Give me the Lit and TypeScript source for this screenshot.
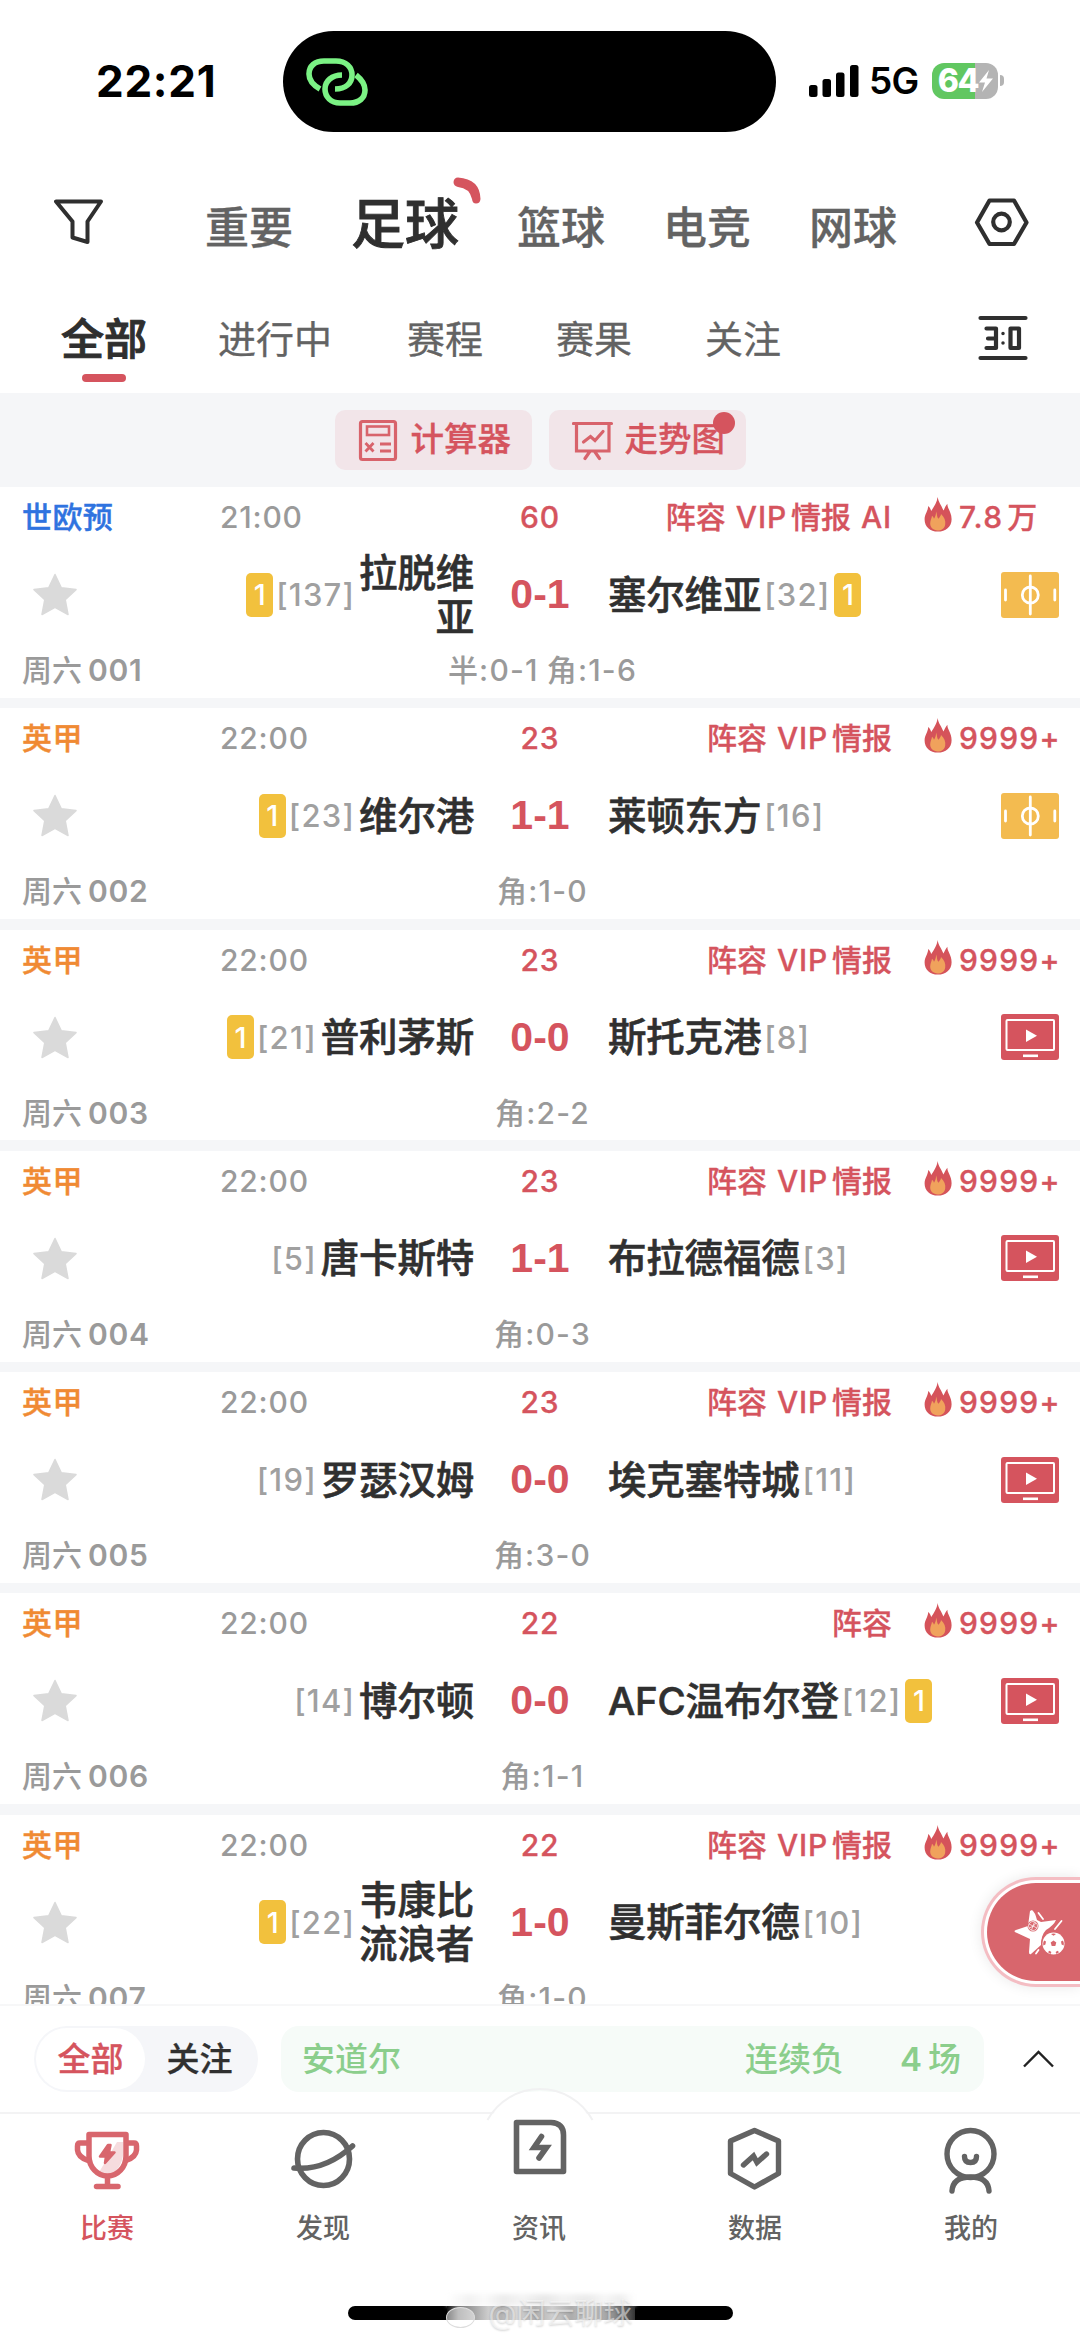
import { LitElement, html, css, svg } from "lit";
import { customElement, property } from "lit/decorators.js";
import { classMap } from "lit/directives/class-map.js";

interface Match {
  league: string;
  color: "blue" | "orange";
  time: string;
  minute: string;
  tags: string[];
  heat: string;
  heatUnit?: string;
  homeCard?: string;
  homeRank: string;
  home: string[];
  score: string;
  away: string;
  awayRank: string;
  awayCard?: string;
  media: "pitch" | "tv";
  no: string;
  half?: string;
  corner: string;
}

const FULL = ["阵容", "VIP", "情报"];

const MATCHES: Match[] = [
  { league: "世欧预", color: "blue", time: "21:00", minute: "60", tags: [...FULL, "AI"], heat: "7.8", heatUnit: "万", homeCard: "1", homeRank: "137", home: ["拉脱维", "亚"], score: "0-1", away: "塞尔维亚", awayRank: "32", awayCard: "1", media: "pitch", no: "001", half: "0-1", corner: "1-6" },
  { league: "英甲", color: "orange", time: "22:00", minute: "23", tags: FULL, heat: "9999+", homeCard: "1", homeRank: "23", home: ["维尔港"], score: "1-1", away: "莱顿东方", awayRank: "16", media: "pitch", no: "002", corner: "1-0" },
  { league: "英甲", color: "orange", time: "22:00", minute: "23", tags: FULL, heat: "9999+", homeCard: "1", homeRank: "21", home: ["普利茅斯"], score: "0-0", away: "斯托克港", awayRank: "8", media: "tv", no: "003", corner: "2-2" },
  { league: "英甲", color: "orange", time: "22:00", minute: "23", tags: FULL, heat: "9999+", homeRank: "5", home: ["唐卡斯特"], score: "1-1", away: "布拉德福德", awayRank: "3", media: "tv", no: "004", corner: "0-3" },
  { league: "英甲", color: "orange", time: "22:00", minute: "23", tags: FULL, heat: "9999+", homeRank: "19", home: ["罗瑟汉姆"], score: "0-0", away: "埃克塞特城", awayRank: "11", media: "tv", no: "005", corner: "3-0" },
  { league: "英甲", color: "orange", time: "22:00", minute: "22", tags: ["阵容"], heat: "9999+", homeRank: "14", home: ["博尔顿"], score: "0-0", away: "AFC温布尔登", awayRank: "12", awayCard: "1", media: "tv", no: "006", corner: "1-1" },
  { league: "英甲", color: "orange", time: "22:00", minute: "22", tags: FULL, heat: "9999+", homeCard: "1", homeRank: "22", home: ["韦康比", "流浪者"], score: "1-0", away: "曼斯菲尔德", awayRank: "10", media: "tv", no: "007", corner: "1-0" },
];

const flame = html`<svg class="flame" viewBox="0 0 28 35" width="28" height="35">
  <path fill="#d5535a" d="M13.600 0C14.200 5 17.600 8.400 19.400 13.600C20.600 11.800 21.400 8.800 23.400 6.800C23 11 27.600 15 27.600 22.200C27.600 29.800 21.600 34.600 13.900 34.600C6 34.600 .6 29.600 .6 22.400C.6 17 4 14.400 4.200 9C5.800 10.400 6.600 12 7.200 14C9.800 10 13 5.600 13.600 0Z"/>
  <path fill="#f0a25c" d="M12 14.500C13.400 17.400 12.600 19.800 14.400 21.800C15.600 20.400 16.800 19 17 17C20.400 20.400 21.800 23.600 21.200 27.400C20.600 31.400 17.400 33.400 13.600 33.400C9.400 33.400 6.200 30.600 6.200 26.600C6.200 23.600 7.600 21.400 8 18.800C9 19.600 9.600 20.600 10 21.800C11.200 19.800 12.200 17.600 12 14.500Z"/>
</svg>`;

const star = html`<svg class="star" viewBox="0 0 44 43" width="44" height="43">
  <path fill="#dadada" stroke="#dadada" stroke-width="1.500" stroke-linejoin="round" d="M22 1.500L28.300 14.800L43 16.600L32.200 26.700L35 41.500L22 34.400L9 41.500L11.800 26.700L1 16.600L15.700 14.800Z"/>
</svg>`;

const media = {
  pitch: html`<svg class="media" viewBox="0 0 58 46" width="58" height="46">
    <rect width="58" height="46" rx="3" fill="#f3bb50"/>
    <g fill="none" stroke="#fff" stroke-width="2.800" stroke-linecap="round">
      <path d="M29.300 4V42M4.500 18V28M53.800 18V28"/><circle cx="29.300" cy="23" r="8"/>
    </g>
  </svg>`,
  tv: html`<svg class="media" viewBox="0 0 58 46" width="58" height="46">
    <rect width="58" height="46" rx="3" fill="#d5545e"/>
    <rect x="5.500" y="6" width="47.500" height="30" rx="1" fill="none" stroke="#fff" stroke-width="2"/>
    <path d="M22 41.800H37" stroke="#fff" stroke-width="2.600"/>
    <path d="M25 15.500L36 21.700L25 28Z" fill="#fff"/>
  </svg>`,
};

@customElement("match-row")
class MatchRow extends LitElement {
  @property({ attribute: false }) match!: Match;

  static styles = css`
    :host { display: block; height: 210.700px; flex: none; background: #fff; font-size: 30px; line-height: 1; color: #9a9a9a; font-weight: 500; }
    .head, .mid, .foot { display: grid; align-items: center; }
    .head { grid-template-columns: 220px 200px 240px 1fr; height: 60px; box-sizing: border-box; }
    .league { padding-left: 22px; -webkit-text-stroke: .4px; letter-spacing: .4px; }
    .blue { color: #2f73e0; }
    .orange { color: #f08a33; }
    .num { letter-spacing: .8px; }
    .red { color: #d5545e; -webkit-text-stroke: .3px; }
    .minute { text-align: center; }
    .info { display: flex; align-items: center; }
    .info .num { letter-spacing: 1.200px; }
    .tags { width: 232px; display: flex; justify-content: flex-end; flex: none; }
    .tag.gap { margin-left: 10px; letter-spacing: .8px; }
    .tag.tight { margin-left: 4px; }
    .flame { margin: -5px 7px 0 32px; flex: none; }
    .unit { margin-left: 4px; }
    .mid { grid-template-columns: 220px 254px 132px 1fr 79px; height: 95px; }
    .star { margin-left: 33px; display: block; }
    .side { display: flex; align-items: center; white-space: nowrap; }
    .home { justify-content: flex-end; }
    .team { font-size: 38.500px; line-height: 44px; font-weight: 500; -webkit-text-stroke: .6px; color: #303030; text-align: right; letter-spacing: -.2px; }
    .team div { white-space: nowrap; }
    .away .team { padding-left: 2px; }
    .rank { font-size: 31px; font-weight: 450; color: #a0a0a0; padding: 0 4px 0 3px; letter-spacing: 1.200px; }
    .card { width: 27px; height: 44px; border-radius: 5px; background: #f2c13d; color: #fff; display: grid; place-items: center; font-size: 29px; font-weight: 450; }
    .score { text-align: center; color: #d5545e; font: 700 41px/1 "Liberation Sans", sans-serif; }
    .media { display: block; }
    .foot { grid-template-columns: 1fr 1fr 1fr; height: 56px; padding: 0 22px; }
    .order { display: flex; gap: 6px; }
    .order b { font-weight: 600; letter-spacing: .7px; }
    .stats { display: flex; justify-content: center; gap: 8px; white-space: nowrap; padding-left: 5px; letter-spacing: 1.200px; }
  `;

  render() {
    const m = this.match;
    const spacing = (t: string) => ({ tag: true, tight: t === "情报", gap: t === "VIP" || t === "AI" });
    return html`
      <div class="head">
        <span class="league ${m.color}">${m.league}</span>
        <span class="num">${m.time}</span>
        <span class="minute red num">${m.minute}</span>
        <div class="info red">
          <div class="tags">${m.tags.map((t) => html`<span class=${classMap(spacing(t))}>${t}</span>`)}</div>
          ${flame}<span class="num">${m.heat}</span>${m.heatUnit ? html`<span class="unit">${m.heatUnit}</span>` : ""}
        </div>
      </div>
      <div class="mid">
        ${star}
        <div class="side home">
          ${m.homeCard ? html`<span class="card">${m.homeCard}</span>` : ""}
          <span class="rank">[${m.homeRank}]</span>
          <div class="team">${m.home.map((l) => html`<div>${l}</div>`)}</div>
        </div>
        <span class="score">${m.score}</span>
        <div class="side away">
          <div class="team">${m.away}</div>
          <span class="rank">[${m.awayRank}]</span>
          ${m.awayCard ? html`<span class="card">${m.awayCard}</span>` : ""}
        </div>
        ${media[m.media]}
      </div>
      <div class="foot">
        <span class="order">周六<b>${m.no}</b></span>
        <span class="stats">${m.half ? html`<span>半:${m.half}</span>` : ""}<span>角:${m.corner}</span></span>
        <span></span>
      </div>
    `;
  }
}

const NAV = [
  { label: "比赛", active: true, icon: svg`
    <path fill="#f6dcde" d="M98 2178L117 2146H123V2160Q120 2176 107 2180Z"/>
    <g fill="none" stroke="#d8666d" stroke-width="5.500" stroke-linejoin="round" stroke-linecap="round">
      <path d="M89 2138.500H126V2160A18.500 20 0 0 1 89 2160Z"/>
      <path d="M87 2147H80Q77.500 2147 77.500 2150V2154Q78 2161 88 2164.500M127 2147H134Q136.500 2147 136.500 2150V2154Q136 2161 126 2164.500"/>
      <path d="M107.500 2181V2190M96.500 2190.500H118"/>
    </g>
    <path fill="#d8666d" stroke="#d8666d" stroke-width="2.500" stroke-linejoin="round" d="M108 2149L100 2160.500H106L105 2167L114.500 2156.500H109L110.500 2149Z"/>` },
  { label: "发现", active: false, icon: svg`
    <g fill="none" stroke="#636363" stroke-width="5.600" stroke-linecap="round">
      <ellipse cx="323.500" cy="2163" rx="26" ry="26.500"/><path d="M294 2172Q325 2175 352.500 2150"/>
    </g>` },
  { label: "资讯", active: false, icon: svg`
    <g fill="none" stroke="#636363" stroke-width="5.600" stroke-linejoin="round" stroke-linecap="round">
      <path d="M516.500 2126.500H551Q563.500 2127 563.500 2139V2175.500H516.500Z"/>
      <path stroke-linejoin="miter" d="M541.500 2140.500L534 2151.500H546.500L539 2162"/>
    </g>` },
  { label: "数据", active: false, icon: svg`
    <g fill="none" stroke="#636363" stroke-width="5.400" stroke-linejoin="round" stroke-linecap="round">
      <path d="M754.500 2134.500L778.500 2145V2177.500L754.500 2191L730.500 2177.500V2145Z"/>
      <path stroke-linejoin="miter" d="M743.500 2169L753.500 2160L757 2166.500L766.500 2158"/>
    </g>` },
  { label: "我的", active: false, icon: svg`
    <g fill="none" stroke="#636363" stroke-width="5.400" stroke-linecap="round">
      <circle cx="970.500" cy="2158" r="23.500"/>
      <path d="M964.500 2160.500Q964.500 2166.500 970.500 2166.500Q976.500 2166.500 976.500 2160.500"/>
      <path d="M952 2195Q953 2181 970.500 2181Q988 2181 989 2195"/>
    </g>` },
];

@customElement("app-root")
class AppRoot extends LitElement {
  static styles = css`
    :host { display: flex; flex-direction: column; width: 1080px; height: 2342px; background: #fff; overflow: hidden; position: relative; font-family: Inter, "Noto Sans CJK SC", sans-serif; line-height: 1; }
    svg { display: block; flex: none; }
    .status { height: 163px; box-sizing: border-box; display: grid; grid-template-columns: 283px 493px 1fr; align-items: center; flex: none; }
    .clock { font-size: 44px; font-weight: 700; padding: 0 0 2px 96px; letter-spacing: .7px; }
    .island { height: 101px; border-radius: 51px; background: #000; display: flex; align-items: center; padding-left: 20px; }
    .signals { display: flex; align-items: center; padding: 0 0 2px 33px; }
    .net { font-size: 37px; font-weight: 600; margin-left: 10px; letter-spacing: -.8px; }
    .battery { width: 66px; height: 36px; margin-left: 14px; border-radius: 12px; background: linear-gradient(90deg, #61c761 0 65%, #b4b4b4 65%); color: #fff; font-size: 32px; font-weight: 800; display: flex; align-items: center; justify-content: center; letter-spacing: -1.500px; }
    .cap { width: 4px; height: 11px; margin-left: 2px; border-radius: 0 5px 5px 0; background: #b4b4b4; }
    .sports { height: 126px; display: flex; align-items: center; flex: none; padding: 0 51px 3px 54px; box-sizing: border-box; }
    .sports nav { display: flex; gap: 58px; align-items: baseline; margin-left: 102px; flex: 1; font-size: 44px; font-weight: 500; color: #636363; -webkit-text-stroke: .3px; }
    .sports .on { font-size: 54px; color: #2f2f2f; position: relative; -webkit-text-stroke: .9px; }
    .swoosh { position: absolute; right: -23px; top: -22px; }
    .funnel, .gear { margin-top: -6px; }
    .filters { height: 104px; display: flex; align-items: center; flex: none; padding: 0 52px 0 61px; box-sizing: border-box; }
    .filters nav { display: flex; gap: 73px; align-items: center; flex: 1; font-size: 38px; color: #636363; padding-bottom: 4px; -webkit-text-stroke: .3px; }
    .filters .on { font-size: 43px; font-weight: 500; -webkit-text-stroke: 1px; color: #2f2f2f; position: relative; }
    .filters .live { margin: 0 2px 0 -2px; }
    .filters .on::after { content: ""; position: absolute; left: 21px; bottom: -21px; width: 44px; height: 8px; border-radius: 4px; background: #d5545e; }
    .filters svg { margin-top: -6px; }
    .tools { height: 94px; background: #f5f6f8; display: flex; justify-content: center; align-items: center; gap: 17px; flex: none; }
    .tool { width: 197px; height: 60px; border-radius: 10px; background: #f2e5e9; color: #d5545e; font-size: 33.500px; font-weight: 500; -webkit-text-stroke: .3px; display: flex; align-items: center; gap: 13px; padding-left: 23px; box-sizing: border-box; position: relative; }
    .board { margin-right: -2px; }
    .dot { position: absolute; right: 11px; top: 2px; width: 22px; height: 22px; border-radius: 50%; background: #d5545e; }
    .list { height: 1517px; overflow: hidden; flex: none; display: flex; flex-direction: column; gap: 10.600px; background: #f5f6f8; }
    .streak { height: 108px; border-top: 2px solid #f7f7f8; box-sizing: border-box; display: flex; align-items: center; flex: none; padding: 0 26px 0 34px; font-size: 33px; font-weight: 500; }
    .seg { width: 224px; height: 66px; border-radius: 33px; background: #f5f6f9; display: flex; padding: 2px 4px 2px 2px; box-sizing: border-box; }
    .seg span { flex: 1; display: grid; place-items: center; border-radius: 31px; color: #303030; -webkit-text-stroke: .3px; }
    .seg .on { background: #fff; color: #d5545e; }
    .trend { margin-left: 23px; width: 703px; height: 66px; border-radius: 18px; background: #f6fbf8; color: #8bce8c; display: flex; align-items: center; padding: 0 23px 0 21px; box-sizing: border-box; }
    .trend .what { margin-left: auto; margin-right: 56px; }
    .trend .n { display: flex; gap: 6px; align-items: center; font-weight: 600; }
    .trend .n i { font-style: normal; font-weight: 500; }
    .chev { margin-left: auto; }
    .tabs { height: 152px; border-top: 2px solid #f3f3f4; box-sizing: border-box; display: flex; flex: none; position: relative; }
    .bump { position: absolute; left: 480px; top: -29px; }
    .tab { flex: 1; display: flex; flex-direction: column; align-items: center; font-size: 27px; font-weight: 500; color: #636363; padding: 6px 2px 0 0; gap: 19px; position: relative; }
    .tab.on { color: #d5545e; }
    .homebar { flex: 1; display: flex; justify-content: center; align-items: flex-start; padding-top: 42px; }
    .bar { width: 385px; height: 14px; border-radius: 7px; background: #000; position: relative; }
    .smear { position: absolute; left: 99px; top: -12px; width: 188px; height: 12px; background: linear-gradient(90deg, #fff, #f2f2f2 12%, #fafafa 20%, #ececec 30%, #f4f4f4 40%, #e8e8e8 52%, #f3f3f3 62%, #eaeaea 74%, #f6f6f6 84%, #eee 92%, #fff); filter: blur(2px); }
    .fade { position: absolute; left: 99px; top: 0; width: 188px; height: 14px; background: linear-gradient(90deg, #111, #7c7c7c 6%, #a8a8a8 15%, #cdcdcd 22%, #b4b4b4 29%, #d6d6d6 37%, #b0b0b0 47%, #cecece 56%, #acacac 66%, #cacaca 76%, #a0a0a0 86%, #6a6a6a 94%, #333); }
    .mark { position: absolute; left: 98px; top: -8px; width: 190px; font-size: 29px; color: rgba(255, 255, 255, .5); text-shadow: 0 1px 2px rgba(0, 0, 0, .16); display: flex; align-items: center; gap: 14px; white-space: nowrap; }
    .eye { width: 27px; height: 19px; border-radius: 50%; border: 1.500px solid #ddd; background: rgba(255, 255, 255, .5); margin-top: 9px; }
    .float { position: absolute; right: 0; top: 1877px; width: 99px; height: 110px; border-radius: 55px 0 0 55px; background: #f4bdc3; box-shadow: 0 0 14px rgba(0, 0, 0, .09); padding: 3px 0 3px 3px; box-sizing: border-box; }
    .ring { height: 104px; border-radius: 52px 0 0 52px; background: #fff; padding: 3px 0 3px 3px; box-sizing: border-box; }
    .core { height: 98px; border-radius: 49px 0 0 49px; background: #d8666d; padding: 26px 0 0 26px; box-sizing: border-box; }
  `;

  render() {
    return html`
      <div class="status">
        <span class="clock">22:21</span>
        <div class="island">
          <svg viewBox="303 54 68 54" width="68" height="54" fill="none" stroke="#7bf284" stroke-width="5.600">
            <path d="M320 88C313 84 309 79 309 73C309 65 315 60 324 60H336C346 60 352 66 352 74C352 82 346 88 335 88"/>
            <path d="M342 74C332 74 325 80 325 88C325 96 331 102 340 102H350C359 102 365 97 365 89C365 82 361 78 356 74"/>
          </svg>
        </div>
        <div class="signals">
          <svg viewBox="0 0 50 32" width="50" height="32"><rect y="20" width="8.500" height="12" rx="2.500"/><rect x="13.500" y="14" width="8.500" height="18" rx="2.500"/><rect x="27" y="7.500" width="8.500" height="24.500" rx="2.500"/><rect x="41" width="8.500" height="32" rx="2.500"/></svg>
          <span class="net">5G</span>
          <span class="battery">64<svg viewBox="0 0 15 22" width="15" height="22"><path fill="#fff" d="M11 0L1 12.500H7L4 22L15 8.500H8.500Z"/></svg></span>
          <span class="cap"></span>
        </div>
      </div>

      <div class="sports">
        <svg class="funnel" viewBox="54 199 49 46" width="49" height="46"><path fill="none" stroke="#2f2f2f" stroke-width="4" stroke-linejoin="round" d="M56 201.500H101L87.500 221.500V242L72.500 237.500V221.500Z"/></svg>
        <nav>
          <span>重要</span>
          <span class="on">足球<svg class="swoosh" viewBox="453 176 30 28" width="30" height="28"><path fill="#d5545e" d="M459 177.500Q481 179 481.500 199Q481 203.500 477 203.500Q473.500 203.500 473 199Q470.500 188 459 187Q454.500 186 454.500 182Q455 177.500 459 177.500Z"/></svg></span>
          <span>篮球</span><span>电竞</span><span>网球</span>
        </nav>
        <svg class="gear" viewBox="974 197 55 50" width="55" height="50" fill="none" stroke="#2f2f2f" stroke-width="4.200" stroke-linejoin="round"><path d="M989.500 200.500H1014L1026.500 222.500L1014 244H989.500L977 222.500Z"/><circle cx="1001.500" cy="222" r="8.300"/></svg>
      </div>

      <div class="filters">
        <nav><span class="on">全部</span><span class="live">进行中</span><span>赛程</span><span>赛果</span><span>关注</span></nav>
        <svg viewBox="978 315 50 46" width="50" height="46" fill="none" stroke="#2f2f2f" stroke-width="4.200" stroke-linecap="round">
          <path d="M980.500 318H1025.500M980.500 358H1025.500"/>
          <path stroke-linejoin="round" d="M986.500 328.500H996V348H986.500M988 338.500H996M1010.500 328.500H1019V348H1010.500Z"/>
          <path stroke-width="3.500" d="M1003 333.500V333.600M1003 343V343.100"/>
        </svg>
      </div>

      <div class="tools">
        <div class="tool">
          <svg viewBox="358 418 40 43" width="40" height="43" fill="none" stroke="#d8636b" stroke-width="3.200"><rect x="360.500" y="420.500" width="35" height="38" rx="2"/><rect x="367" y="425.500" width="22" height="8.500" stroke-width="2.600"/><path stroke-width="2.800" d="M365.500 442L373.500 450.500M373.500 442L365.500 450.500M380 443H391M380 450H391"/></svg>
          计算器
        </div>
        <div class="tool">
          <svg class="board" viewBox="572 418 42 43" width="42" height="43" fill="none" stroke="#d8636b" stroke-width="3.200" stroke-linecap="round"><path d="M573.500 422.500H611.500M576.500 423V450H609V423M589.500 451L585 457.500M595 451L599.500 457.500"/><path d="M583.500 441L590.500 435.500L595 439.500L603 430.500"/></svg>
          走势图<i class="dot"></i>
        </div>
      </div>

      <div class="list">${MATCHES.map((m) => html`<match-row .match=${m}></match-row>`)}</div>

      <div class="streak">
        <div class="seg"><span class="on">全部</span><span>关注</span></div>
        <div class="trend"><span>安道尔</span><span class="what">连续负</span><span class="n"><span>4</span><i>场</i></span></div>
        <svg class="chev" viewBox="0 0 31 18" width="31" height="18"><path fill="none" stroke="#222" stroke-width="2.400" d="M1 16.500L15.500 2L30 16.500"/></svg>
      </div>

      <div class="tabs">
        <svg class="bump" viewBox="480 2084 120 38" width="120" height="38"><path fill="#fff" d="M487 2122A60 60 0 0 1 593 2122Z"/><path fill="none" stroke="#f1f1f2" stroke-width="2" d="M487.500 2119A60 60 0 0 1 592.500 2119"/></svg>
        ${NAV.map((n, i) => html`
          <div class=${classMap({ tab: true, on: n.active })}>
            <svg viewBox="${67 + i * 216} 2124 80 76" width="80" height="76" overflow="visible">${n.icon}</svg>
            <span>${n.label}</span>
          </div>`)}
      </div>
      <div class="homebar">
        <div class="bar"><i class="smear"></i><i class="fade"></i><span class="mark"><i class="eye"></i>@闲云聊球</span></div>
      </div>

      <div class="float"><div class="ring"><div class="core">
        <svg viewBox="1012 1908 54 48" width="54" height="48">
          <path fill="#fff" d="M1031 1909Q1034 1911 1036 1919L1040 1921L1055 1919Q1053 1924 1045 1929Q1042 1932 1041 1936L1040 1944L1030 1953Q1028 1954 1028 1951L1029 1938L1015 1931.500Q1012 1930 1015 1929L1027 1925L1029 1910Z"/>
          <path stroke="#fff" stroke-width="1.800" stroke-linecap="round" d="M1037.500 1912L1042 1918M1060.500 1920L1054 1928M1037.500 1949L1035 1952.500"/>
          <circle cx="1032" cy="1925" r="5.500" fill="#d8666d"/><circle cx="1032" cy="1925" r="4.500" fill="none" stroke="#fff" stroke-width=".7"/><path stroke="#fff" stroke-width=".7" fill="none" d="M1028 1923L1036 1927M1033.500 1921L1030.500 1929M1028 1927Q1033 1926 1035 1922"/>
          <circle cx="1052.500" cy="1942.500" r="12.500" fill="#d8666d"/><circle cx="1052.500" cy="1942.500" r="11" fill="#fff"/>
          <g fill="#d8666d"><path d="M1052.500 1939.500L1055.300 1941.600L1054.300 1945H1050.700L1049.700 1941.600Z"/><path d="M1050 1933L1052.500 1934.700L1055 1933Q1052.500 1931.900 1050 1933ZM1043 1939.500L1045 1940.500L1044.400 1943.600L1042.300 1944.500Q1041.700 1942 1043 1939.500ZM1062 1939.500L1060 1940.500L1060.600 1943.600L1062.700 1944.500Q1063.300 1942 1062 1939.500ZM1047 1950.900L1048.600 1949.700L1050.300 1950.900L1049.900 1952.800Q1048 1952.300 1047 1950.900ZM1058 1950.900L1056.400 1949.700L1054.700 1950.900L1055.100 1952.800Q1057 1952.300 1058 1950.900Z"/></g>
        </svg>
      </div></div></div>
    `;
  }
}
